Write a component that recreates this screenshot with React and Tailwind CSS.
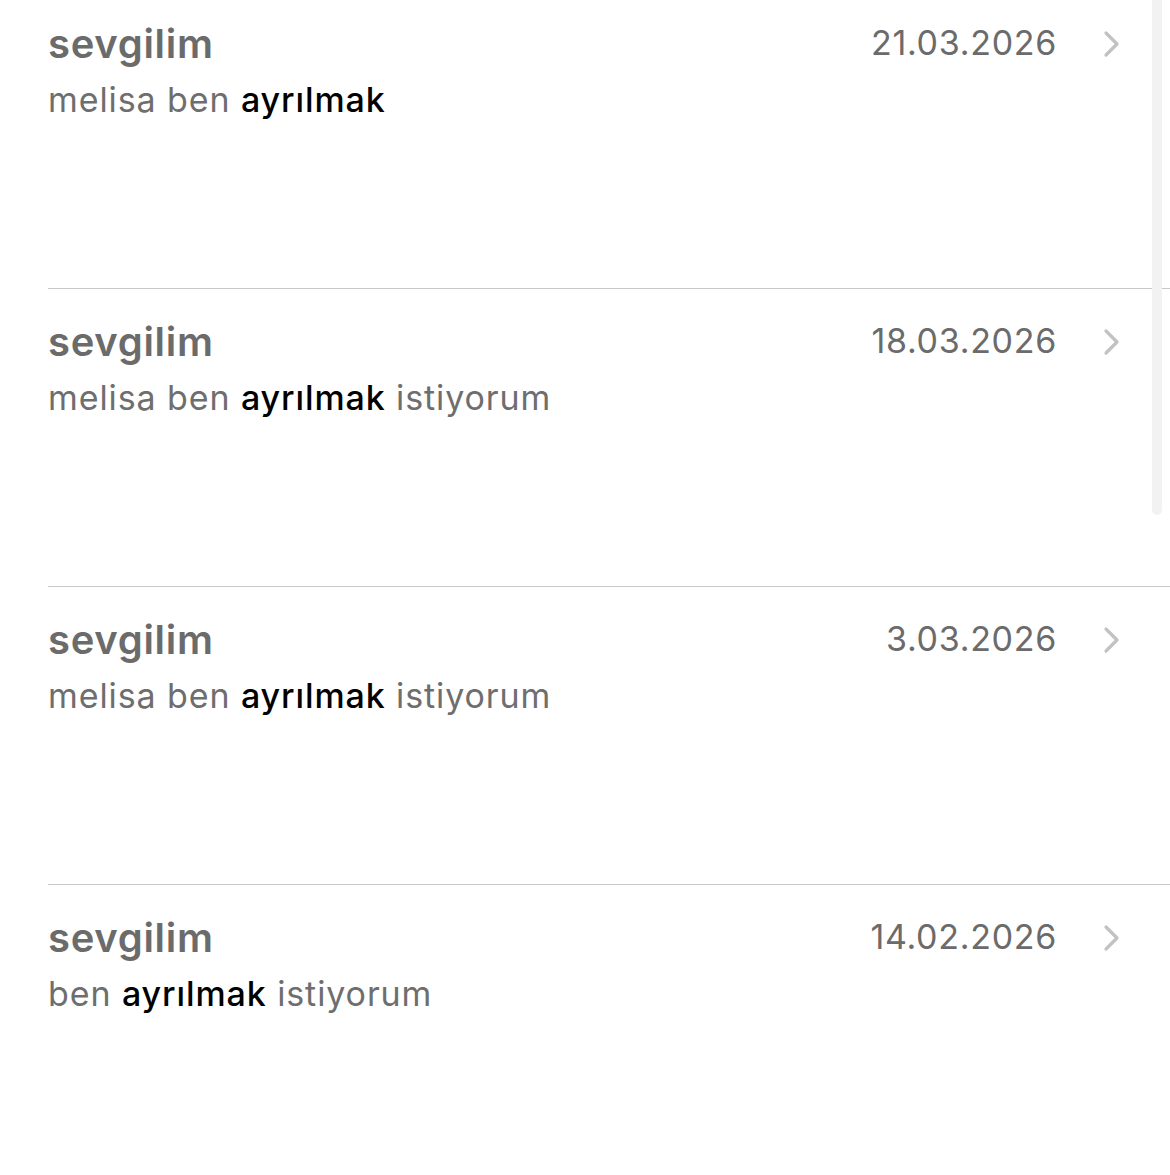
import React from 'react';

const notes = [
  { date: '21.03.2026', before: 'melisa ben ', after: '' },
  { date: '18.03.2026', before: 'melisa ben ', after: ' istiyorum' },
  { date: '3.03.2026', before: 'melisa ben ', after: ' istiyorum' },
  { date: '14.02.2026', before: 'ben ', after: ' istiyorum' },
];

function Chevron() {
  return (
    <svg width="18" height="28" viewBox="0 0 18 28" className="mt-[13px]">
      <polyline
        points="3,3 14,14 3,25"
        fill="none"
        stroke="#c2c2c4"
        strokeWidth="3.2"
        strokeLinecap="round"
        strokeLinejoin="round"
      />
    </svg>
  );
}

function NoteRow({ note, first }) {
  return (
    <div className={first ? 'h-[289px] pt-[17px] border-b border-[#c8c8ca]' : 'h-[298px] pt-[26px] border-b border-[#c8c8ca]'}>
      <div className="flex items-start">
        <div className="flex-1">
          <div className="text-[40px] font-semibold leading-[54px] tracking-[0.7px] text-[#6b6b6b]">sevgilim</div>
          <div className="text-[34px] leading-[54px] mt-[2px] tracking-[0.9px] text-[#6e6e6e]">
            {note.before}
            <span className="text-black font-medium">ayrılmak</span>
            {note.after}
          </div>
        </div>
        <div className="text-[34px] leading-[54px] -mt-[1px] text-[#6b6b6b] tracking-[0.7px]">{note.date}</div>
        <div className="w-[113px] flex justify-start pl-[46px]">
          <Chevron />
        </div>
      </div>
    </div>
  );
}

export default function App() {
  return (
    <div className="relative w-[1170px] h-[1175px] bg-white overflow-hidden" style={{ fontFamily: 'Inter, "Noto Sans", sans-serif' }}>
      <div className="pl-[48px]">
        {notes.map((n, i) => (
          <NoteRow key={i} note={n} first={i === 0} />
        ))}
      </div>
      <div className="absolute top-0 left-[1152px] w-[10px] h-[515px] rounded-b-full bg-[#f2f2f3]" />
    </div>
  );
}
